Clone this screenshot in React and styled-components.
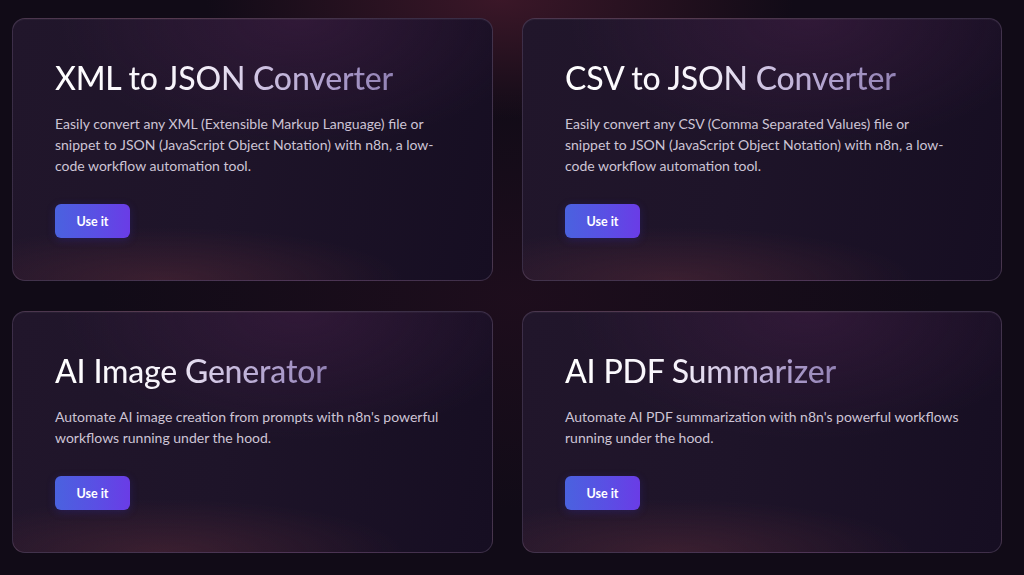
import React from "react";
import styled, { createGlobalStyle } from "styled-components";

const Global = createGlobalStyle`
  html, body { margin: 0; padding: 0; }
  body {
    width: 1024px;
    height: 575px;
    overflow: hidden;
    background: #110b17;
    font-family: Lato, "Open Sans", sans-serif;
  }
`;

const Page = styled.main`
  box-sizing: border-box;
  width: 1024px;
  height: 575px;
  padding: 18px 22px 0 12px;
  background:
    radial-gradient(ellipse 420px 170px at 500px 0px, rgba(84, 30, 50, 0.62), transparent 70%),
    radial-gradient(ellipse 600px 300px at 520px 300px, rgba(42, 16, 34, 0.5), transparent 70%),
    #110b17;
`;

const Grid = styled.div`
  display: grid;
  grid-template-columns: 481px 480px;
  column-gap: 29px;
  row-gap: 30px;
  align-items: start;
`;

const Card = styled.section`
  box-sizing: border-box;
  border-radius: 13px;
  border: 1px solid rgba(200, 170, 210, 0.2);
  padding: 39px 20px 42px 42px;
  background:
    radial-gradient(ellipse 320px 70px at 150px 100%, rgba(110, 50, 60, 0.35), transparent 75%),
    radial-gradient(ellipse 320px 170px at 60% 0%, rgba(80, 34, 80, 0.38), transparent 75%),
    linear-gradient(100deg, #21162b 0%, #1e1429 45%, #160e22 100%);
  box-shadow: inset 0 1px 0 rgba(255, 255, 255, 0.04);
`;

const Title = styled.h2`
  margin: 0;
  display: inline-block;
  font-family: Lato, "Open Sans", sans-serif;
  font-weight: 500;
  font-size: 32px;
  line-height: 40px;
  letter-spacing: -0.2px;
  background: linear-gradient(90deg, #ffffff 0%, #f6f2fa 42%, #cfc3e2 60%, #a898c8 85%, #9282b4 100%);
  -webkit-background-clip: text;
  background-clip: text;
  color: transparent;
`;

const Description = styled.p`
  margin: 15px 0 0;
  max-width: 412px;
  font-size: 14px;
  line-height: 21px;
  color: #cdc4d5;
`;

const Line = styled.span`
  display: block;
`;

const Button = styled.button`
  margin-top: 28px;
  width: 75px;
  height: 34px;
  border: none;
  border-radius: 6px;
  background: linear-gradient(90deg, #4a62df 0%, #5a4fe4 55%, #6a3ce6 100%);
  color: #ffffff;
  font-family: Lato, "Open Sans", sans-serif;
  font-weight: 700;
  font-size: 12.5px;
  cursor: pointer;
  display: block;
  box-shadow: 0 2px 8px rgba(60, 50, 200, 0.25);
`;

const tools = [
  {
    title: "XML to JSON Converter",
    lines: [
      "Easily convert any XML (Extensible Markup Language) file or",
      "snippet to JSON (JavaScript Object Notation) with n8n, a low-",
      "code workflow automation tool.",
    ],
  },
  {
    title: "CSV to JSON Converter",
    lines: [
      "Easily convert any CSV (Comma Separated Values) file or",
      "snippet to JSON (JavaScript Object Notation) with n8n, a low-",
      "code workflow automation tool.",
    ],
  },
  {
    title: "AI Image Generator",
    lines: [
      "Automate AI image creation from prompts with n8n's powerful",
      "workflows running under the hood.",
    ],
  },
  {
    title: "AI PDF Summarizer",
    lines: [
      "Automate AI PDF summarization with n8n's powerful workflows",
      "running under the hood.",
    ],
  },
];

export default function App() {
  return (
    <>
      <Global />
      <Page>
        <Grid>
          {tools.map((t) => (
            <Card key={t.title}>
              <Title>{t.title}</Title>
              <Description>
                {t.lines.map((l) => (
                  <Line key={l}>{l}</Line>
                ))}
              </Description>
              <Button>Use it</Button>
            </Card>
          ))}
        </Grid>
      </Page>
    </>
  );
}
